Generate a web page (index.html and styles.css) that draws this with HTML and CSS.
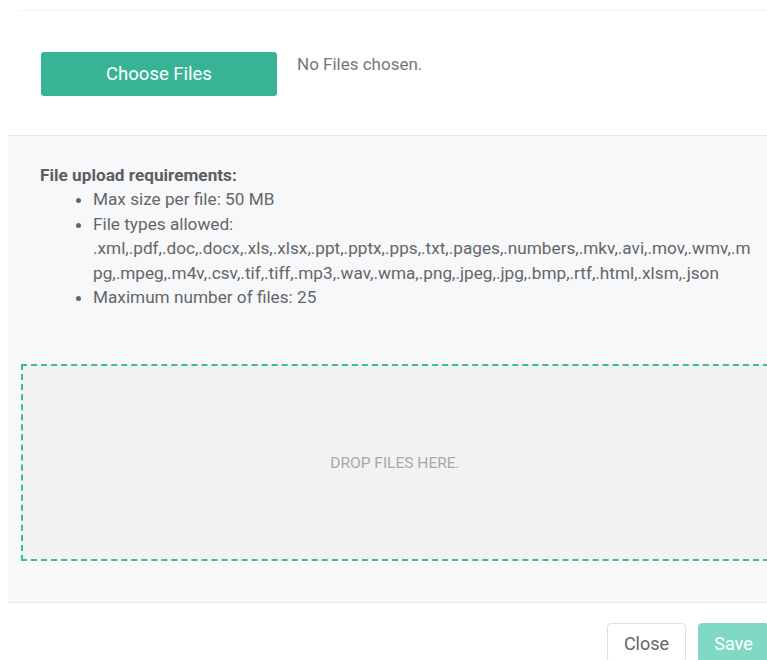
FILE: index.html
```html
<!DOCTYPE html>
<html lang="en">
<head>
<meta charset="utf-8">
<title>Upload files</title>
<link rel="stylesheet" href="styles.css">
</head>
<body>
<div class="modal">
  <div class="modal-top">
    <div class="top-rule"></div>
    <div class="upload-row">
      <button class="btn-choose" type="button">Choose Files</button>
      <span class="file-status">No Files chosen.</span>
    </div>
  </div>
  <div class="modal-body">
    <div class="requirements">
      <div class="req-title">File upload requirements:</div>
      <ul class="req-list">
        <li>Max size per file: 50 MB</li>
        <li>File types allowed: <span class="ext-list">.xml,.pdf,.doc,.docx,.xls,.xlsx,.ppt,.pptx,.pps,.txt,.pages,.numbers,.mkv,.avi,.mov,.wmv,.mpg,.mpeg,.m4v,.csv,.tif,.tiff,.mp3,.wav,.wma,.png,.jpeg,.jpg,.bmp,.rtf,.html,.xlsm,.json</span></li>
        <li>Maximum number of files: 25</li>
      </ul>
    </div>
    <div class="dropzone">DROP FILES HERE.</div>
  </div>
  <div class="modal-footer">
    <button class="btn btn-close" type="button">Close</button>
    <button class="btn btn-save" type="button" disabled>Save</button>
  </div>
</div>
</body>
</html>
```

FILE: styles.css
```css
html, body {
  margin: 0;
  padding: 0;
  background: #ffffff;
  overflow: hidden;
}

body {
  font-family: Roboto, "Liberation Sans", Arial, sans-serif;
  color: #666666;
}

.modal {
  margin-left: 8px;
  width: 774px;
  background: #ffffff;
}

/* header area with the file picker */
.modal-top {
  padding: 10px 0 0 12px;
}

.top-rule {
  border-top: 1px solid #f1f1f1;
}

.upload-row {
  display: flex;
  align-items: flex-start;
  padding: 41px 0 39px 21px;
}

.btn-choose {
  width: 236px;
  height: 44px;
  border: none;
  border-radius: 3px;
  background: #37b494;
  color: #ffffff;
  font-family: inherit;
  font-size: 18.5px;
  cursor: pointer;
}

.file-status {
  margin-left: 20px;
  font-size: 17px;
  line-height: 24px;
  color: #777777;
}

/* grey body with the requirements and the drop zone */
.modal-body {
  background: #f7f8fa;
  border-top: 1px solid #e6e7e9;
  padding: 27px 13px 41px 13px;
}

.requirements {
  padding: 0 0 0 19px;
  font-size: 17.2px;
  line-height: 24.4px;
  color: #666666;
}

.req-title {
  font-weight: 700;
  color: #5e5e5e;
}

.req-list {
  margin: 0;
  padding: 0 14px 0 53px;
}

.ext-list {
  display: block;
  word-break: break-all;
}

.dropzone {
  margin-top: 55px;
  height: 193px;
  border: 2px dashed #3dbb97;
  background: #f2f2f2;
  display: flex;
  align-items: center;
  justify-content: center;
  font-size: 15.5px;
  color: #a9a9a9;
}

/* footer buttons */
.modal-footer {
  border-top: 1px solid #e6e7e9;
  display: flex;
  justify-content: flex-end;
  gap: 12px;
  padding: 20px 13px 0 0;
}

.btn {
  height: 40px;
  border-radius: 4px;
  font-family: inherit;
  font-size: 18px;
  padding: 0 15px;
}

.btn-close {
  width: 79px;
  background: #ffffff;
  border: 1px solid #e0e0e0;
  color: #666666;
}

.btn-save {
  width: 71px;
  background: #80dac3;
  border: 1px solid #80dac3;
  color: #ffffff;
}
```
